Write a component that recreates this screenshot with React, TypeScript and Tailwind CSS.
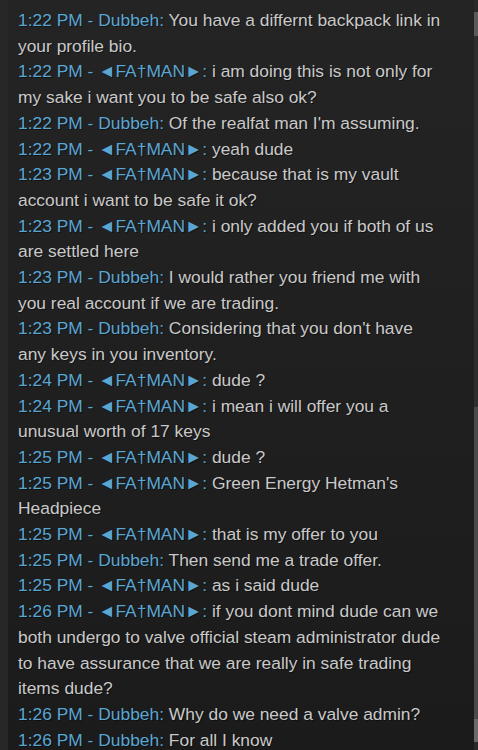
const messages = [
  { time: '1:22 PM', who: 'Dubbeh', text: 'You have a differnt backpack link in your profile bio.' },
  { time: '1:22 PM', who: '◄FA†MAN►', text: 'i am doing this is not only for my sake i want you to be safe also ok?' },
  { time: '1:22 PM', who: 'Dubbeh', text: "Of the realfat man I'm assuming." },
  { time: '1:22 PM', who: '◄FA†MAN►', text: 'yeah dude' },
  { time: '1:23 PM', who: '◄FA†MAN►', text: 'because that is my vault account i want to be safe it ok?' },
  { time: '1:23 PM', who: '◄FA†MAN►', text: 'i only added you if both of us are settled here' },
  { time: '1:23 PM', who: 'Dubbeh', text: 'I would rather you friend me with you real account if we are trading.' },
  { time: '1:23 PM', who: 'Dubbeh', text: "Considering that you don't have any keys in you inventory." },
  { time: '1:24 PM', who: '◄FA†MAN►', text: 'dude ?' },
  { time: '1:24 PM', who: '◄FA†MAN►', text: 'i mean i will offer you a unusual worth of 17 keys' },
  { time: '1:25 PM', who: '◄FA†MAN►', text: 'dude ?' },
  { time: '1:25 PM', who: '◄FA†MAN►', text: "Green Energy Hetman's Headpiece" },
  { time: '1:25 PM', who: '◄FA†MAN►', text: 'that is my offer to you' },
  { time: '1:25 PM', who: 'Dubbeh', text: 'Then send me a trade offer.' },
  { time: '1:25 PM', who: '◄FA†MAN►', text: 'as i said dude' },
  {
    time: '1:26 PM',
    who: '◄FA†MAN►',
    text: 'if you dont mind dude can we both undergo to valve official steam administrator dude to have assurance that we are really in safe trading items dude?',
  },
  { time: '1:26 PM', who: 'Dubbeh', text: 'Why do we need a valve admin?' },
  { time: '1:26 PM', who: 'Dubbeh', text: 'For all I know' },
];

export default function App() {
  return (
    <div className="w-[478px] h-[750px] overflow-hidden flex bg-gradient-to-b from-[#242424] to-[#1b1b1b] font-['Liberation_Sans',Arial,sans-serif]">
      <div className="w-[8px] shrink-0 bg-[#272727]" />
      <div className="flex-1 pl-[10px] pr-[30px] pt-[8px] text-[17.4px] leading-[25.7px] text-[#c9c9c9] [text-shadow:1px_1px_0_rgba(0,0,0,0.45)]">
        {messages.map((m, i) => (
          <div key={i}>
            <span className="text-[#5aa6d3]">
              {m.time} - {m.who}:
            </span>{' '}
            {m.text}
          </div>
        ))}
      </div>
      <div className="w-[4px] shrink-0 flex flex-col bg-[#2a2a2a]">
        <div className="h-[12px]" />
        <div className="h-[24px] bg-[#5a5a5a]" />
        <div className="h-[371px] bg-[#2e2e2e]" />
        <div className="h-[312px] bg-[#4a4a4a]" />
        <div className="h-[23px] bg-[#6a6a6a]" />
      </div>
    </div>
  );
}
